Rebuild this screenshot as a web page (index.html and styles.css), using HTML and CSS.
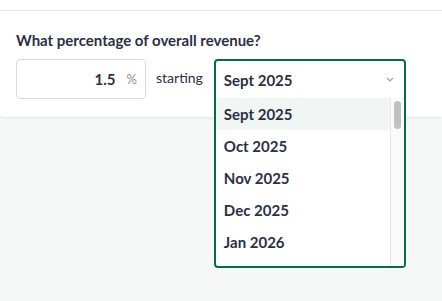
FILE: index.html
```html
<!DOCTYPE html>
<html>
<head>
<meta charset="utf-8">
<link rel="stylesheet" href="styles.css">
</head>
<body>
<div class="top-card"></div>
<div class="card">
  <h2 class="question">What percentage of overall revenue?</h2>
  <div class="row">
    <div class="pct-box">
      <span class="pct-value">1.5</span>
      <span class="pct-sign">%</span>
    </div>
    <span class="starting">starting</span>
    <div class="select open">
      <div class="select-head">
        <span>Sept 2025</span>
        <svg class="chev" width="8" height="5" viewBox="0 0 8 5"><path d="M1 1l3 3 3-3" fill="none" stroke="#9aa0aa" stroke-width="1.2"/></svg>
      </div>
      <div class="menu">
        <ul class="options">
          <li class="active">Sept 2025</li>
          <li>Oct 2025</li>
          <li>Nov 2025</li>
          <li>Dec 2025</li>
          <li>Jan 2026</li>
        </ul>
        <div class="scrollbar"><div class="thumb"></div></div>
      </div>
    </div>
  </div>
</div>
</body>
</html>
```

FILE: styles.css
```css
body {
  margin: 0;
  background: #f6f8f8;
  font-family: Lato, "Noto Sans", sans-serif;
  color: #2b3044;
  height: 301px;
  overflow: hidden;
}

.top-card {
  height: 10px;
  background: #fff;
  border-bottom: 1px solid #e4e6e8;
}

.card {
  background: #fff;
  height: 106px;
  padding: 20px 16px 0;
  box-sizing: border-box;
  box-shadow: 0 1px 3px rgba(0, 0, 0, 0.08);
  border-radius: 0 0 0 4px;
}

.question {
  margin: 0;
  font-size: 15px;
  font-weight: 700;
  line-height: 18px;
}

.row {
  display: flex;
  align-items: flex-start;
  margin-top: 10px;
}

.pct-box {
  width: 130px;
  height: 40px;
  box-sizing: border-box;
  border: 1px solid #d8dadf;
  border-radius: 4px;
  display: flex;
  align-items: center;
  justify-content: flex-end;
  padding-right: 8px;
}

.pct-value {
  font-size: 15px;
  font-weight: 700;
}

.pct-sign {
  font-size: 13px;
  color: #8a8f99;
  margin-left: 11px;
}

.starting {
  font-size: 14px;
  margin: 10px 11px 0 10px;
}

.select {
  width: 192px;
  height: 209px;
  box-sizing: border-box;
  border: 2px solid #056c4b;
  border-radius: 4px;
  background: #fff;
  position: relative;
  z-index: 2;
  display: flex;
  flex-direction: column;
}

.select-head {
  height: 37px;
  flex: none;
  display: flex;
  align-items: center;
  justify-content: space-between;
  padding: 0 10px 0 8px;
  font-size: 15px;
  font-weight: 700;
}

.menu {
  flex: 1;
  display: flex;
  overflow: hidden;
}

.options {
  list-style: none;
  margin: 0;
  padding: 0;
  flex: 1;
}

.options li {
  height: 32px;
  line-height: 32px;
  padding-left: 8px;
  font-size: 15px;
  font-weight: 700;
}

.options li.active {
  background: #f1f6f4;
}

.scrollbar {
  width: 14px;
  flex: none;
  background: #fafafa;
  border-left: 1px solid #e8e8e8;
  padding: 3px 3px 0 3px;
  box-sizing: border-box;
}

.thumb {
  height: 28px;
  background: #c1c1c1;
  border-radius: 4px;
}
```
